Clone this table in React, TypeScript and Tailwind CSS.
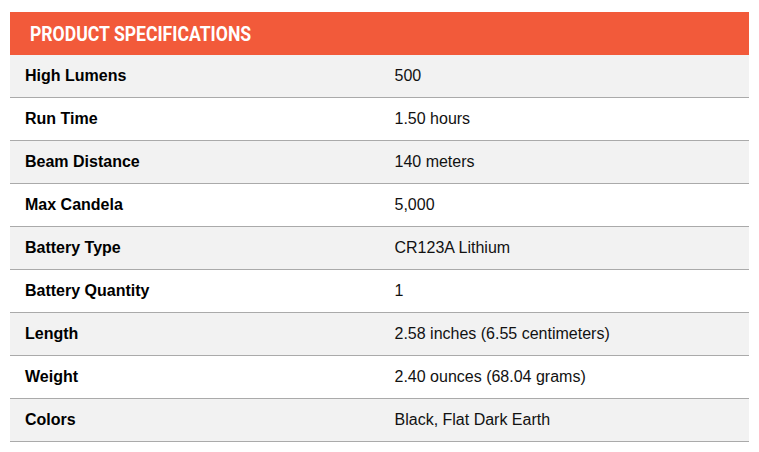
const specs: [string, string][] = [
  ['High Lumens', '500'],
  ['Run Time', '1.50 hours'],
  ['Beam Distance', '140 meters'],
  ['Max Candela', '5,000'],
  ['Battery Type', 'CR123A Lithium'],
  ['Battery Quantity', '1'],
  ['Length', '2.58 inches (6.55 centimeters)'],
  ['Weight', '2.40 ounces (68.04 grams)'],
  ['Colors', 'Black, Flat Dark Earth'],
];

export default function App() {
  return (
    <div className="w-[759px] h-[452px] bg-white pt-3 px-[10px] font-['Liberation_Sans',Arial,sans-serif]">
      <div className="h-[43px] bg-[#f25a3a] flex items-center px-5">
        <h2 className="text-white text-[20px] font-bold font-['Roboto',sans-serif] uppercase inline-block origin-left scale-x-[0.88] whitespace-nowrap">
          Product Specifications
        </h2>
      </div>
      {specs.map(([label, value], i) => (
        <div
          key={label}
          className={`grid grid-cols-2 h-[43px] items-center border-b border-[#aaaaaa] text-[16px] ${
            i % 2 === 0 ? 'bg-[#f2f2f2]' : 'bg-white'
          }`}
        >
          <div className="px-[15px] font-bold text-black -mt-px">{label}</div>
          <div className="px-[15px] text-[#111] -mt-px">{value}</div>
        </div>
      ))}
    </div>
  );
}
